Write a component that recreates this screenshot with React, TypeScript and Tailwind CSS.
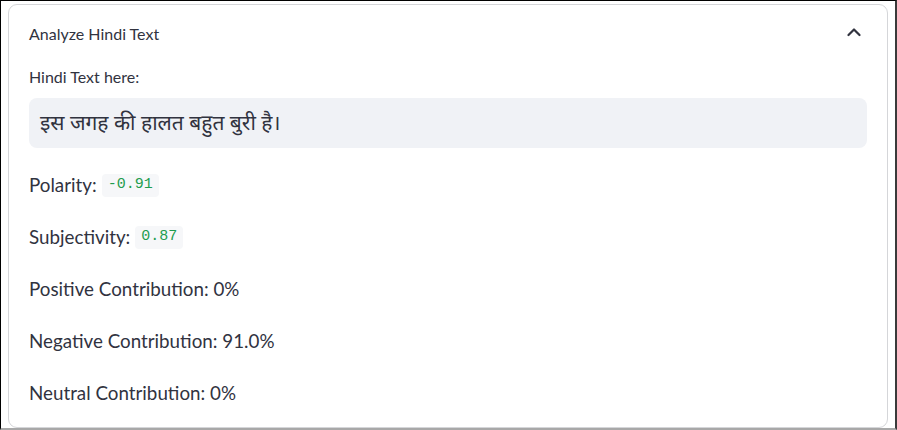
import React from "react";

function Row({ children, first }: { children: React.ReactNode; first?: boolean }) {
  return (
    <div className={`h-[52px] flex items-center text-[18.8px] text-[#31333f] ${first ? "mt-[11px]" : ""}`}>
      {children}
    </div>
  );
}

function Code({ children }: { children: React.ReactNode }) {
  return (
    <span className="ml-[5px] inline-flex items-center h-[23px] px-[6px] rounded-[4px] bg-[#f6f7f9] text-[#1f9d4f] text-[15px] font-['Liberation_Mono',monospace]">
      {children}
    </span>
  );
}

export default function App() {
  return (
    <div className="w-[897px] h-[430px] bg-white border-l border-t border-black border-r-2 border-r-[#3a3a3a] border-b-2 border-b-[#a8a8a8] overflow-hidden font-['Lato',sans-serif]">
      <div className="ml-[7px] mt-[3px] w-[880px] h-[424px] border border-[#d5d6d9] rounded-[9px] bg-white">
        <div className="h-[58px] px-[20px] flex items-center justify-between text-[#31333f]">
          <span className="text-[16px]">Analyze Hindi Text</span>
          <svg width="14" height="10" viewBox="0 0 14 10" className="mr-[6px] -mt-[4px]">
            <path d="M1.5 8 L7 2.5 L12.5 8" fill="none" stroke="#31333f" strokeWidth="2.2" strokeLinecap="round" strokeLinejoin="round" />
          </svg>
        </div>
        <div className="px-[20px]">
          <div className="h-[20px] mt-[4px] flex items-center text-[16px] text-[#31333f]">Hindi Text here:</div>
          <div className="mt-[11px] h-[50px] rounded-[8px] bg-[#f0f2f6] flex items-center px-[11px] text-[21px] text-[#31333f] font-['Noto_Sans',sans-serif]">
            इस जगह की हालत बहुत बुरी है।
          </div>
          <Row first>
            Polarity:<Code>-0.91</Code>
          </Row>
          <Row>
            Subjectivity:<Code>0.87</Code>
          </Row>
          <Row>Positive Contribution: 0%</Row>
          <Row>Negative Contribution: 91.0%</Row>
          <Row>Neutral Contribution: 0%</Row>
        </div>
      </div>
    </div>
  );
}
